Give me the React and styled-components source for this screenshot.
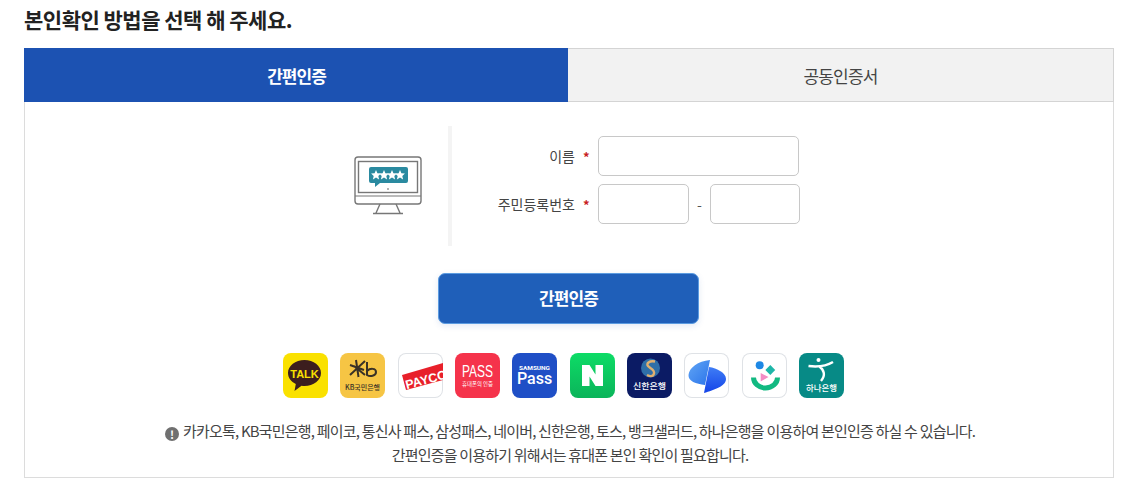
import React from 'react';
import styled, { createGlobalStyle } from 'styled-components';

const GlobalStyle = createGlobalStyle`
    html, body {
        margin: 0;
        padding: 0;
        background: #fff;
    }
    body {
        font-family: "Noto Sans CJK KR", "Noto Sans", sans-serif;
        color: #333;
    }
    * {
        box-sizing: border-box;
    }
`;

const Page = styled.div`
    width: 1140px;
    height: 503px;
    padding: 0 26px 25px 24px;
    overflow: hidden;
`;

const Heading = styled.h2`
    margin: 0;
    height: 48px;
    padding-top: 4px;
    font-size: 21px;
    line-height: 30px;
    font-weight: 700;
    color: #222;
    letter-spacing: -0.5px;
`;

const Tabs = styled.div`
    display: flex;
    height: 54px;
`;

const Tab = styled.div`
    flex: ${ props => props.active ? '0 0 544px' : '1' };
    display: flex;
    align-items: center;
    justify-content: center;
    padding-left: ${ props => props.active ? '2px' : '0' };
    font-size: 17px;
    font-weight: ${ props => props.active ? 700 : 400 };
    letter-spacing: ${ props => props.active ? '-1px' : '-0.8px' };
    color: ${ props => props.active ? '#fff' : '#444' };
    background: ${ props => props.active ? '#1c52b2' : '#f2f2f2' };
    border: 1px solid ${ props => props.active ? '#1c52b2' : '#d4d4d4' };
    border-left: 0;
`;

const Panel = styled.div`
    height: 376px;
    border: 1px solid #dcdcdc;
    border-top: 0;
    padding-top: 24px;
    display: flex;
    flex-direction: column;
    align-items: center;
`;

const FormRow = styled.div`
    display: flex;
    height: 120px;
    margin-left: 16px;
`;

const MonitorBox = styled.div`
    width: 94px;
    display: flex;
    align-items: center;
`;

const Form = styled.div`
    border-left: 4px solid #f4f4f4;
    width: 352px;
    padding-top: 10px;
    display: flex;
    flex-direction: column;
    gap: 8px;
`;

const Field = styled.div`
    display: flex;
    align-items: center;
    height: 40px;
`;

const Label = styled.label`
    width: 123px;
    text-align: right;
    font-size: 14px;
    color: #444;
`;

const Star = styled.span`
    width: 23px;
    padding-left: 8px;
    font-size: 13px;
    font-weight: 700;
    color: #c81e1e;
`;

const Input = styled.input`
    width: ${ props => props.w }px;
    height: 40px;
    background: #fff;
    border: 1px solid #c8c8c8;
    border-radius: 5px;
    outline: none;
`;

const Dash = styled.span`
    width: 21px;
    text-align: center;
    font-size: 14px;
    color: #555;
`;

const SubmitButton = styled.button`
    margin-top: 27px;
    margin-right: 2px;
    width: 261px;
    height: 51px;
    background: #1f5fb9;
    border: 1px solid #5b9be0;
    border-radius: 7px;
    box-shadow: 0 2px 6px rgba(30, 80, 170, 0.12);
    color: #fff;
    font-family: inherit;
    font-size: 17px;
    font-weight: 700;
    letter-spacing: -0.9px;
    line-height: 46px;
    padding: 0 0 2px 1px;
`;

const Logos = styled.div`
    margin-top: 29px;
    margin-right: 11px;
    display: flex;
    gap: 12.33px;
`;

const Logo = styled.div`
    width: 45px;
    height: 45px;
    border-radius: 8px;
    overflow: hidden;
    background: ${ props => props.bg || '#fff' };
    box-shadow: ${ props => props.outlined ? 'inset 0 0 0 1px #dfe2e6' : 'none' };

    svg {
        display: block;
        width: 100%;
        height: 100%;
    }
`;

const Notice = styled.div`
    margin-top: 21px;
    padding-left: 2px;
    text-align: center;
    font-size: 15px;
    line-height: 24px;
    letter-spacing: -0.8px;
    color: #444;
`;

const NoticeIcon = styled.span`
    display: inline-block;
    width: 14px;
    height: 14px;
    margin-right: 4px;
    vertical-align: -2px;
    border-radius: 50%;
    background: #707070;
    color: #fff;
    font-size: 11px;
    line-height: 14px;
    font-weight: 700;
    letter-spacing: 0;
`;

const families = {
    kr: '"Noto Sans CJK KR", sans-serif',
    arial: '"Liberation Sans", sans-serif',
    roboto: 'Roboto, sans-serif',
};

const LogoText = styled.text`
    font-family: ${ props => families[props.family || 'kr'] };
    font-weight: ${ props => props.weight || 700 };
    font-size: ${ props => props.size }px;
    fill: ${ props => props.color || '#fff' };
    text-anchor: middle;
`;

const STAR = 'M0-5l1.400 3.300 3.500.300-2.600 2.300.800 3.500L0 2.500-3.100 4.400-2.300.900-4.900-1.400l3.500-.300z';

function MonitorIcon() {
    return (
        <svg width="70" height="60" viewBox="0 0 70 60" fill="none">
            <rect x="1" y="1" width="66" height="47" rx="3" stroke="#777" strokeWidth="1.400" />
            <rect x="4.500" y="5.500" width="59" height="31" stroke="#777" strokeWidth="1.400" />
            <path d="M1 40h66" stroke="#777" strokeWidth="1.200" />
            <path d="M26 48l-4 9M42 48l4 9M19 57.500h30" stroke="#777" strokeWidth="1.400" />
            <path d="M17 11h35a2 2 0 0 1 2 2v12a2 2 0 0 1-2 2H26l-5 4v-4h-4a2 2 0 0 1-2-2V13a2 2 0 0 1 2-2z" fill="#2a8aa0" />
            { [22, 30, 38, 46].map(x => (
                <path key={ x } d={ STAR } transform={ `translate(${ x } 19)` } fill="#fff" />
            )) }
            <circle cx="34" cy="33" r="0.800" fill="#555" />
        </svg>
    );
}

const logos = [
    {
        bg: '#fae100',
        art: (
            <>
                <path d="M21.500 7C12.400 7 5 12.800 5 20c0 4.700 3.100 8.700 7.800 11L11.500 38l7-5.200c1 .1 2 .2 3 .2C30.600 33 38 27.200 38 20S30.600 7 21.500 7z" fill="#3c1e1e" />
                <LogoText x="21.500" y="24.500" size="11" color="#fae100" family="arial">TALK</LogoText>
            </>
        ),
    },
    {
        bg: '#f6c544',
        art: (
            <>
                <path d="M16 7l2.500 17M10 12l14 5M25 8L10 22M14 13l11 9" stroke="#3a3226" strokeWidth="2" fill="none" />
                <path d="M27 9v13c3 2 9 1 9-3s-6-4-9-1" stroke="#3a3226" strokeWidth="2" fill="none" />
                <LogoText x="22.500" y="37" size="7" color="#3a3226" weight="500" textLength="35" lengthAdjust="spacingAndGlyphs">KB국민은행</LogoText>
            </>
        ),
    },
    {
        outlined: true,
        art: (
            <>
                <polygon points="4,22 45,10 45,27 8,37" fill="#e8202a" />
                <g transform="rotate(-15 24 27)">
                    <LogoText x="28" y="32" size="12.500" family="arial">PAYCO</LogoText>
                </g>
            </>
        ),
    },
    {
        bg: '#f5334b',
        art: (
            <>
                <LogoText x="22.500" y="23.500" size="16" weight="400" family="arial" textLength="31" lengthAdjust="spacingAndGlyphs">PASS</LogoText>
                <LogoText x="22.500" y="33" size="5.500" weight="400" textLength="31" lengthAdjust="spacingAndGlyphs">휴대폰의 인증</LogoText>
            </>
        ),
    },
    {
        bg: '#1f4fc6',
        art: (
            <>
                <LogoText x="22.500" y="17" size="5" family="roboto" textLength="31" lengthAdjust="spacingAndGlyphs">SAMSUNG</LogoText>
                <LogoText x="22.500" y="31" size="16" weight="500" family="roboto">Pass</LogoText>
            </>
        ),
    },
    {
        bg: 'linear-gradient(180deg, #0ddc66, #0bb45a)',
        art: <path d="M12 12h7.500l6 9.500V12H33v21h-7.500l-6-9.500V33H12z" fill="#fff" />,
    },
    {
        bg: '#0b1b64',
        art: (
            <>
                <circle cx="23.500" cy="15" r="9.500" fill="#2f6fa8" />
                <path d="M28 8.500c-6-1-9 2-7 4.500s7 3.500 6 7.500-5 2.500-7 1.500" stroke="#e0b070" strokeWidth="2.400" fill="none" />
                <LogoText x="22.500" y="36" size="8.500" weight="500" textLength="33" lengthAdjust="spacingAndGlyphs">신한은행</LogoText>
            </>
        ),
    },
    {
        outlined: true,
        art: (
            <>
                <defs>
                    <linearGradient id="tossLeft" x1="0" y1="0" x2="1" y2="1">
                        <stop offset="0" stopColor="#62a6f5" />
                        <stop offset="1" stopColor="#2b74ea" />
                    </linearGradient>
                    <linearGradient id="tossRight" x1="0" y1="0" x2="0" y2="1">
                        <stop offset="0" stopColor="#3f7df5" />
                        <stop offset="1" stopColor="#1444e8" />
                    </linearGradient>
                </defs>
                <path d="M26 7C14 8 5 15 4.500 22c-.500 6 7.500 9 16.500 10z" fill="url(#tossLeft)" />
                <path d="M25 14c8 1 17 6 17 12 0 7-12 11-22 14z" fill="url(#tossRight)" />
            </>
        ),
    },
    {
        outlined: true,
        art: (
            <>
                <circle cx="17.700" cy="12.300" r="4" fill="#1e88e5" />
                <rect x="24.800" y="13.500" width="7" height="7" transform="rotate(45 28.300 17)" fill="#1eb6a8" />
                <polygon points="18.700,20 18.700,28.500 26.500,24" fill="#f48cc4" />
                <path d="M11.500 24.500a12 10.500 0 0 0 24 0" stroke="#12b981" strokeWidth="5" fill="none" />
            </>
        ),
    },
    {
        bg: '#078a86',
        art: (
            <>
                <path d="M9.500 13c8 1 18 0 24.500-4M20 13c5 4 7 9 2 15" stroke="#fff" strokeWidth="2.400" fill="none" />
                <circle cx="19.500" cy="7" r="2" fill="#fff" />
                <LogoText x="22.500" y="37.500" size="8.500" weight="500" textLength="31" lengthAdjust="spacingAndGlyphs">하나은행</LogoText>
            </>
        ),
    },
];

export default function App() {
    return (
        <Page>
            <GlobalStyle />
            <Heading>본인확인 방법을 선택 해 주세요.</Heading>
            <Tabs>
                <Tab active>간편인증</Tab>
                <Tab>공동인증서</Tab>
            </Tabs>
            <Panel>
                <FormRow>
                    <MonitorBox>
                        <MonitorIcon />
                    </MonitorBox>
                    <Form>
                        <Field>
                            <Label>이름</Label>
                            <Star>*</Star>
                            <Input w={201} />
                        </Field>
                        <Field>
                            <Label>주민등록번호</Label>
                            <Star>*</Star>
                            <Input w={91} />
                            <Dash>-</Dash>
                            <Input w={90} />
                        </Field>
                    </Form>
                </FormRow>
                <SubmitButton>간편인증</SubmitButton>
                <Logos>
                    { logos.map((logo, i) => (
                        <Logo key={ i } bg={ logo.bg } outlined={ logo.outlined }>
                            <svg viewBox="0 0 45 45">{ logo.art }</svg>
                        </Logo>
                    )) }
                </Logos>
                <Notice>
                    <NoticeIcon>!</NoticeIcon>
                    카카오톡, KB국민은행, 페이코, 통신사 패스, 삼성패스, 네이버, 신한은행, 토스, 뱅크샐러드, 하나은행을 이용하여 본인인증 하실 수 있습니다.
                    <br />
                    간편인증을 이용하기 위해서는 휴대폰 본인 확인이 필요합니다.
                </Notice>
            </Panel>
        </Page>
    );
}
